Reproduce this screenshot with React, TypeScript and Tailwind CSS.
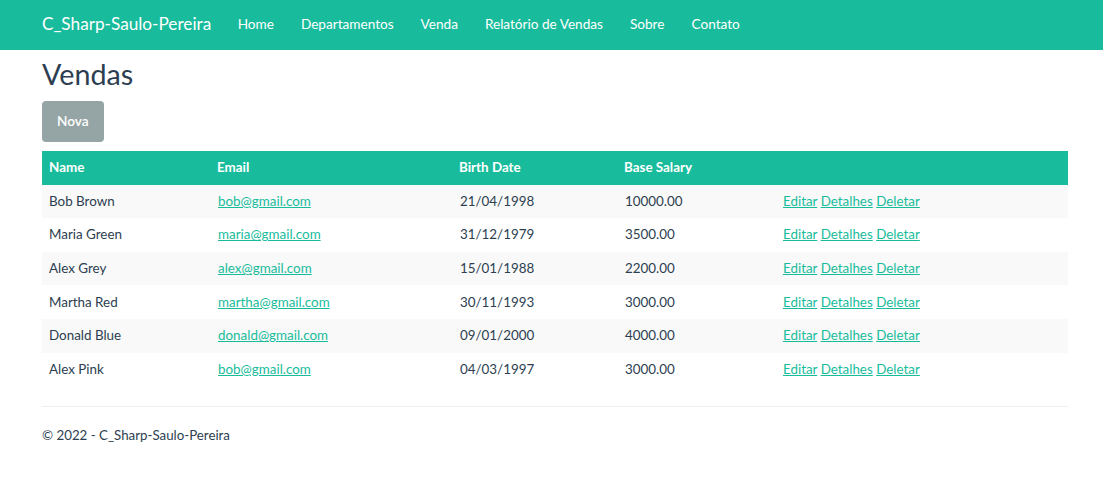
import React from "react";

const rows = [
  ["Bob Brown", "bob@gmail.com", "21/04/1998", "10000.00"],
  ["Maria Green", "maria@gmail.com", "31/12/1979", "3500.00"],
  ["Alex Grey", "alex@gmail.com", "15/01/1988", "2200.00"],
  ["Martha Red", "martha@gmail.com", "30/11/1993", "3000.00"],
  ["Donald Blue", "donald@gmail.com", "09/01/2000", "4000.00"],
  ["Alex Pink", "bob@gmail.com", "04/03/1997", "3000.00"],
];

const navLinks = ["Home", "Departamentos", "Venda", "Relatório de Vendas", "Sobre", "Contato"];

export default function App() {
  return (
    <div className="min-h-[501px] bg-white text-[#2c3e50] text-[15px] leading-[1.42857]" style={{ fontFamily: "Lato, 'Noto Sans', sans-serif" }}>
      <nav className="h-[50px] bg-[#18bc9c] flex items-center px-[42px] pb-[2px]">
        <a className="text-white text-[17.2px] mr-[13px]" href="#">C_Sharp-Saulo-Pereira</a>
        <ul className="flex items-center">
          {navLinks.map((l) => (
            <li key={l} className="px-[13.5px]">
              <a className="text-white text-[13.6px]" href="#">{l}</a>
            </li>
          ))}
        </ul>
      </nav>
      <main className="px-[42px] w-[1110px]">
        <h2 className="text-[28.7px] leading-[1.1] mt-[9px] mb-[10px] font-normal">Vendas</h2>
        <a href="#" className="inline-block bg-[#95a5a6] text-white rounded-[4px] px-[15px] py-[10px] text-[13.6px] font-semibold leading-[21px]">Nova</a>
        <table className="w-[1026px] table-fixed mt-[9px] border-collapse">
          <colgroup>
            <col className="w-[168px]" />
            <col className="w-[242px]" />
            <col className="w-[165px]" />
            <col className="w-[158px]" />
            <col />
          </colgroup>
          <thead>
            <tr className="bg-[#18bc9c] text-white h-[34px]">
              <th className="text-left font-bold px-[7px] text-[13.4px]">Name</th>
              <th className="text-left font-bold px-[7px] text-[13.4px]">Email</th>
              <th className="text-left font-bold px-[7px] text-[13.4px]">Birth Date</th>
              <th className="text-left font-bold px-[7px] text-[13.4px]">Base Salary</th>
              <th className="px-[7px]"></th>
            </tr>
          </thead>
          <tbody>
            {rows.map((r, i) => (
              <tr key={i} className={`h-[33.6px] ${i % 2 === 0 ? "bg-[#f9f9f9]" : "bg-white"}`}>
                <td className="px-[7px] text-[13.4px]">{r[0]}</td>
                <td className="px-[8px] text-[13.4px]"><a href="#" className="text-[#18bc9c] underline">{r[1]}</a></td>
                <td className="px-[8px] text-[13.4px]">{r[2]}</td>
                <td className="px-[8px] text-[13.4px]">{r[3]}</td>
                <td className="px-[8px] text-[13.4px]">
                  <a href="#" className="text-[#18bc9c] underline">Editar</a>{" "}
                  <a href="#" className="text-[#18bc9c] underline">Detalhes</a>{" "}
                  <a href="#" className="text-[#18bc9c] underline">Deletar</a>
                </td>
              </tr>
            ))}
          </tbody>
        </table>
        <hr className="mt-[20px] border-0 border-t border-[#ecf0f1] w-[1026px]" />
        <footer className="pt-[19px]">
          <p className="text-[13.3px]">© 2022 - C_Sharp-Saulo-Pereira</p>
        </footer>
      </main>
    </div>
  );
}
